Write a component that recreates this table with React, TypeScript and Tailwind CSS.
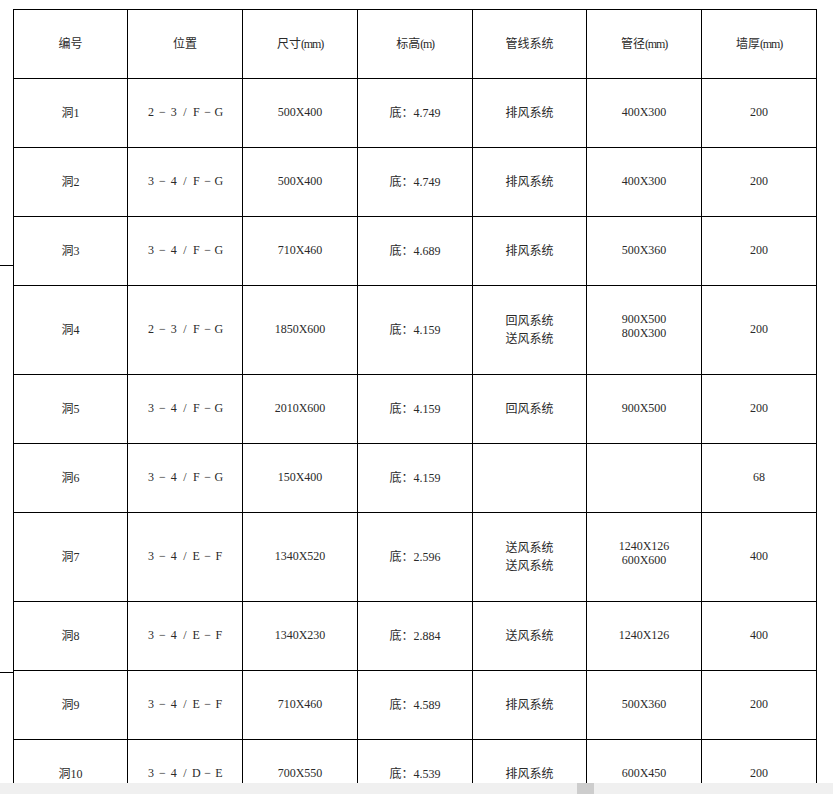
const rows = [
  { id: '洞1', pos: '2-3/F-G', size: '500X400', elev: '4.749', sys: ['排风系统'], pipe: ['400X300'], wall: '200' },
  { id: '洞2', pos: '3-4/F-G', size: '500X400', elev: '4.749', sys: ['排风系统'], pipe: ['400X300'], wall: '200' },
  { id: '洞3', pos: '3-4/F-G', size: '710X460', elev: '4.689', sys: ['排风系统'], pipe: ['500X360'], wall: '200' },
  { id: '洞4', pos: '2-3/F-G', size: '1850X600', elev: '4.159', sys: ['回风系统', '送风系统'], pipe: ['900X500', '800X300'], wall: '200' },
  { id: '洞5', pos: '3-4/F-G', size: '2010X600', elev: '4.159', sys: ['回风系统'], pipe: ['900X500'], wall: '200' },
  { id: '洞6', pos: '3-4/F-G', size: '150X400', elev: '4.159', sys: [], pipe: [], wall: '68' },
  { id: '洞7', pos: '3-4/E-F', size: '1340X520', elev: '2.596', sys: ['送风系统', '送风系统'], pipe: ['1240X126', '600X600'], wall: '400' },
  { id: '洞8', pos: '3-4/E-F', size: '1340X230', elev: '2.884', sys: ['送风系统'], pipe: ['1240X126'], wall: '400' },
  { id: '洞9', pos: '3-4/E-F', size: '710X460', elev: '4.589', sys: ['排风系统'], pipe: ['500X360'], wall: '200' },
  { id: '洞10', pos: '3-4/D-E', size: '700X550', elev: '4.539', sys: ['排风系统'], pipe: ['600X450'], wall: '200' },
];

function Cell({ children, tall }: { children?: React.ReactNode; tall?: boolean }) {
  return (
    <div className={`${tall ? 'h-[89px]' : 'h-[69px]'} border-r border-b border-black flex flex-col items-center justify-center text-center`}>
      {children}
    </div>
  );
}

// grid-position text, each glyph sits in its own fixed slot
function Spaced({ text }: { text: string }) {
  return (
    <div className="flex">
      {text.split('').map((c, i) => (
        <span key={i} className="w-[11.3px] text-center">{c === '-' ? '−' : c}</span>
      ))}
    </div>
  );
}

function Unit({ label, unit }: { label: string; unit: string }) {
  return (
    <span>
      {label}
      <span className="tracking-[-1.2px]">{unit}</span>
    </span>
  );
}

export default function App() {
  return (
    <div className="w-[833px] h-[794px] bg-white flex flex-col overflow-hidden antialiased">
      <div className="relative flex-1 overflow-hidden pt-[9px] pl-[13px]">
        {/* margin ticks */}
        <div className="absolute left-0 top-[265px] w-[13px] h-px bg-black"></div>
        <div className="absolute left-0 top-[672px] w-[13px] h-px bg-black"></div>

        <div className="grid grid-cols-[114px_115px_115px_115px_114px_115px_115px] w-[804px] border-l border-t border-black text-[12px] leading-[14px] text-[#2a2a2a] font-['Liberation_Serif','Noto_Sans_CJK_SC',serif]">
          <Cell>编号</Cell>
          <Cell>位置</Cell>
          <Cell><Unit label="尺寸" unit="(mm)" /></Cell>
          <Cell><Unit label="标高" unit="(m)" /></Cell>
          <Cell>管线系统</Cell>
          <Cell><Unit label="管径" unit="(mm)" /></Cell>
          <Cell><Unit label="墙厚" unit="(mm)" /></Cell>

          {rows.map((r) => {
            const tall = r.sys.length > 1;
            return (
              <div key={r.id} className="contents">
                <Cell tall={tall}>{r.id}</Cell>
                <Cell tall={tall}><div className="-mt-[3px]"><Spaced text={r.pos} /></div></Cell>
                <Cell tall={tall}><div className="-mt-[3px]">{r.size}</div></Cell>
                <Cell tall={tall}>底：{r.elev}</Cell>
                <Cell tall={tall}>
                  {r.sys.map((s, i) => (
                    <div key={i} className={tall ? 'leading-[18px]' : ''}>{s}</div>
                  ))}
                </Cell>
                <Cell tall={tall}>
                  <div className={tall ? 'mb-[8px]' : '-mt-[3px]'}>
                    {r.pipe.map((p, i) => (
                      <div key={i}>{p}</div>
                    ))}
                  </div>
                </Cell>
                <Cell tall={tall}><div className="-mt-[3px]">{r.wall}</div></Cell>
              </div>
            );
          })}
        </div>
      </div>

      {/* horizontal scrollbar */}
      <div className="h-[11px] bg-[#f0f0f0] shrink-0 relative">
        <div className="absolute left-[577px] top-0 w-[17px] h-full bg-[#cdcdcd]"></div>
      </div>
    </div>
  );
}
